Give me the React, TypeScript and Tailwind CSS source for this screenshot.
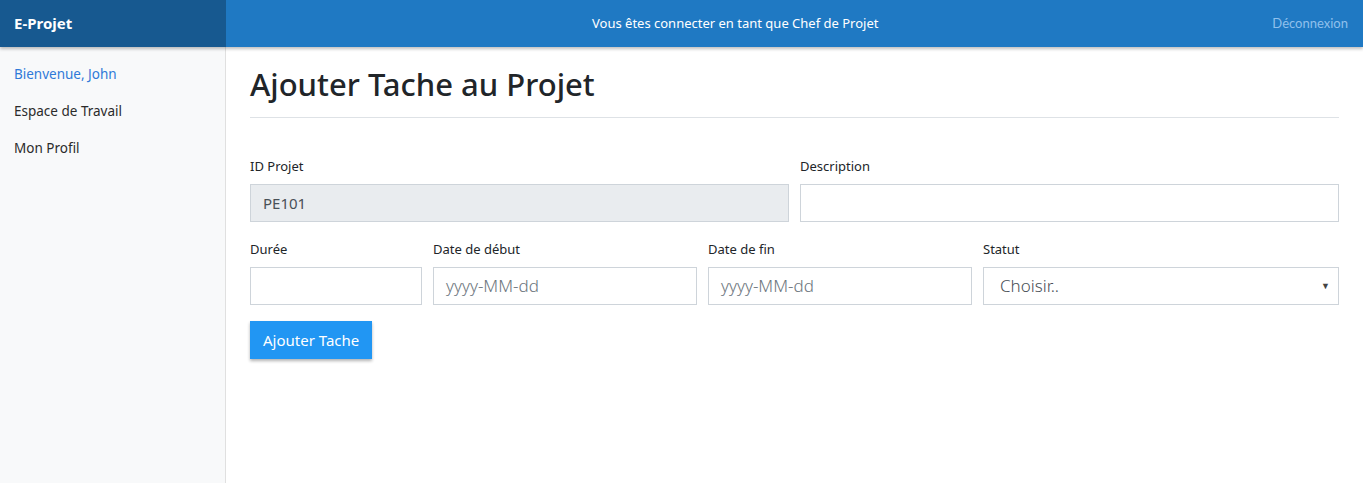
import React from "react";

export default function App() {
  return (
    <div className="min-h-[483px] h-[483px] flex flex-col bg-white text-[#212529] font-['Noto_Sans',sans-serif]">
      <header className="h-[47px] flex items-stretch bg-[#1f79c3] shadow-[0_2px_3px_rgba(0,0,0,0.25)] relative z-10 shrink-0">
        <div className="w-[226px] shrink-0 bg-[#175990] flex items-center px-[14px] text-white font-bold text-[15px]">E-Projet</div>
        <div className="flex-1 flex items-center pl-[366px] text-white text-[13px]">Vous êtes connecter en tant que Chef de Projet</div>
        <div className="flex items-center pr-[15px] text-[13px] text-[#8fc0ec] font-['Lato',sans-serif]">Déconnexion</div>
      </header>
      <div className="flex flex-1 min-h-0">
        <aside className="w-[226px] shrink-0 bg-[#f8f9fa] border-r border-[#e0e0e0] flex flex-col pt-[17px] px-[14px] gap-[17px] text-[13.5px]">
          <div className="text-[#2f7ad8] leading-[20px]">Bienvenue, John</div>
          <div className="text-[#2b2b2b] leading-[20px]">Espace de Travail</div>
          <div className="text-[#2b2b2b] leading-[20px]">Mon Profil</div>
        </aside>
        <main className="flex-1 px-[24px] pt-[18px]">
          <h2 className="text-[31px] font-medium leading-[38px] text-[#212529] pb-[14px] border-b border-[#dee2e6]">Ajouter Tache au Projet</h2>
          <div className="mt-[39px] flex gap-[11px]">
            <div className="flex-1 flex flex-col">
              <label className="text-[13px] leading-[18px] mb-[9px]">ID Projet</label>
              <div className="h-[38px] border border-[#ced4da] bg-[#e9ecef] flex items-center px-[12px] text-[15px] text-[#495057]">PE101</div>
            </div>
            <div className="flex-1 flex flex-col">
              <label className="text-[13px] leading-[18px] mb-[9px]">Description</label>
              <div className="h-[38px] border border-[#ced4da] bg-white"></div>
            </div>
          </div>
          <div className="mt-[18px] flex gap-[11px]">
            <div className="w-[172px] flex flex-col">
              <label className="text-[13px] leading-[18px] mb-[9px]">Durée</label>
              <div className="h-[38px] border border-[#ced4da] bg-white"></div>
            </div>
            <div className="w-[264px] flex flex-col">
              <label className="text-[13px] leading-[18px] mb-[9px]">Date de début</label>
              <div className="h-[38px] border border-[#ced4da] bg-white flex items-center px-[12px] text-[17px] font-light text-[#6c757d]">yyyy-MM-dd</div>
            </div>
            <div className="w-[264px] flex flex-col">
              <label className="text-[13px] leading-[18px] mb-[9px]">Date de fin</label>
              <div className="h-[38px] border border-[#ced4da] bg-white flex items-center px-[12px] text-[17px] font-light text-[#6c757d]">yyyy-MM-dd</div>
            </div>
            <div className="flex-1 flex flex-col">
              <label className="text-[13px] leading-[18px] mb-[9px]">Statut</label>
              <div className="h-[38px] border border-[#ced4da] bg-white flex items-center justify-between pl-[16px] pr-[8px] text-[17px] font-light text-[#495057]">
                <span>Choisir..</span>
                <span className="text-[9px] text-[#444]">▼</span>
              </div>
            </div>
          </div>
          <button className="mt-[16px] h-[38px] px-[13px] bg-[#2196f3] text-white text-[15px] shadow-[0_2px_3px_rgba(0,0,0,0.3)]">Ajouter Tache</button>
        </main>
      </div>
    </div>
  );
}
